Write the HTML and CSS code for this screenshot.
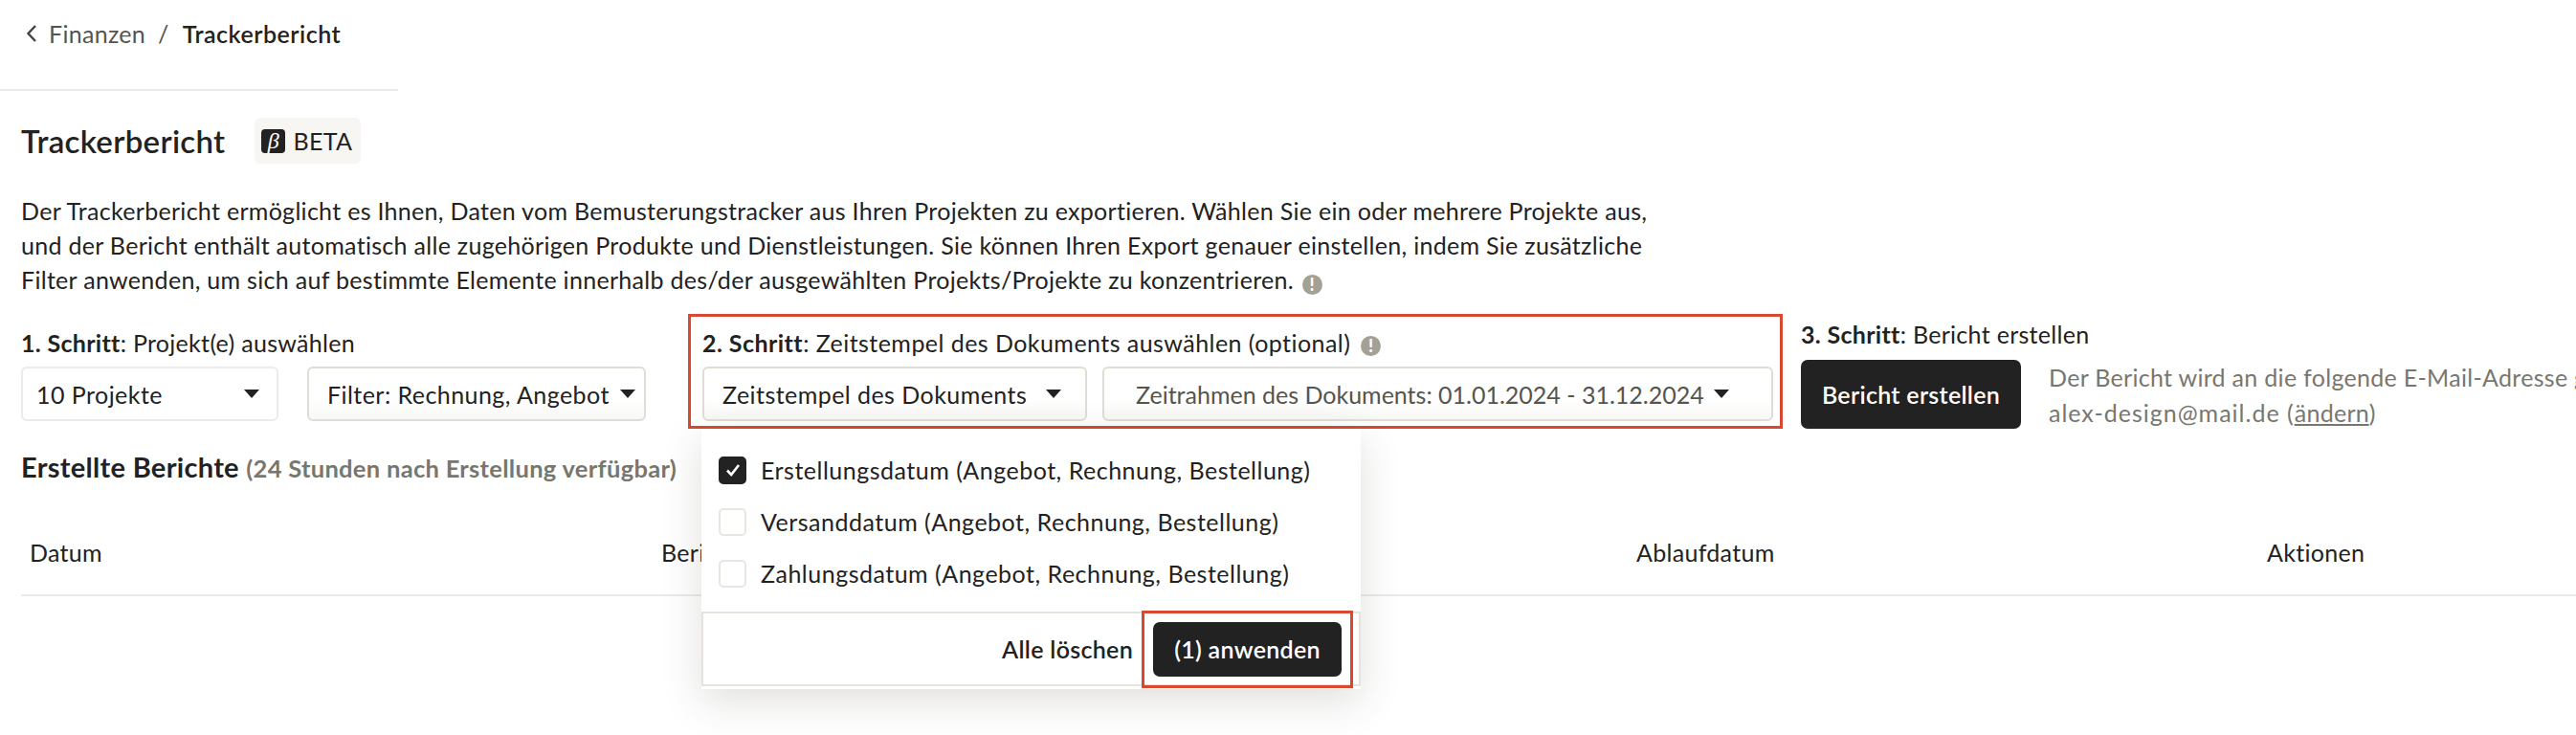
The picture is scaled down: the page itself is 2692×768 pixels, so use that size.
FILE: index.html
```html
<!DOCTYPE html>
<html lang="de">
<head>
    <meta charset="UTF-8">
    <title>Trackerbericht</title>
    <link rel="stylesheet" href="styles.css">
</head>
<body>
    <header class="topbar">
        <nav class="breadcrumb">
            <svg class="back-icon" width="12" height="20" viewBox="0 0 12 20"><path d="M10 2 L2.5 10 L10 18" fill="none" stroke="#44443f" stroke-width="2.4"/></svg>
            <span class="crumb-parent">Finanzen</span>
            <span class="crumb-sep">/</span>
            <span class="crumb-current">Trackerbericht</span>
        </nav>
    </header>

    <main class="content">
        <div class="title-row">
            <h1>Trackerbericht</h1>
            <div class="beta-badge">
                <span class="beta-icon">β</span>
                <span>BETA</span>
            </div>
        </div>

        <p class="intro">Der Trackerbericht ermöglicht es Ihnen, Daten vom Bemusterungstracker aus Ihren Projekten zu exportieren. Wählen Sie ein oder mehrere Projekte aus,<br>und der Bericht enthält automatisch alle zugehörigen Produkte und Dienstleistungen. Sie können Ihren Export genauer einstellen, indem Sie zusätzliche<br>Filter anwenden, um sich auf bestimmte Elemente innerhalb des/der ausgewählten Projekts/Projekte zu konzentrieren. <span class="info-icon">!</span></p>

        <div class="steps">
            <section class="step step-one">
                <div class="step-label"><b>1. Schritt</b>: Projekt(e) auswählen</div>
                <div class="select-row">
                    <div class="select select-projects"><span>10 Projekte</span><i class="caret"></i></div>
                    <div class="select select-filter select-strong"><span>Filter: Rechnung, Angebot</span><i class="caret"></i></div>
                </div>
            </section>

            <section class="step step-two">
                <div class="step-label"><b>2. Schritt</b>: Zeitstempel des Dokuments auswählen (optional) <span class="info-icon">!</span></div>
                <div class="select-row">
                    <div class="select select-stamp select-strong"><span>Zeitstempel des Dokuments</span><i class="caret"></i></div>
                    <div class="select select-range select-strong"><span>Zeitrahmen des Dokuments: 01.01.2024 - 31.12.2024</span><i class="caret"></i></div>
                </div>

                <!-- offenes Dropdown -->
                <div class="dropdown">
                    <div class="option-list">
                        <label class="option"><i class="checkbox checked"><svg width="20" height="20" viewBox="0 0 20 20"><path d="M4 10.5 L8.2 15 L16 5" fill="none" stroke="#fff" stroke-width="2.6"/></svg></i>Erstellungsdatum (Angebot, Rechnung, Bestellung)</label>
                        <label class="option"><i class="checkbox"></i>Versanddatum (Angebot, Rechnung, Bestellung)</label>
                        <label class="option"><i class="checkbox"></i>Zahlungsdatum (Angebot, Rechnung, Bestellung)</label>
                    </div>
                    <div class="dropdown-footer">
                        <span class="clear-all">Alle löschen</span>
                        <div class="apply-frame"><button class="btn btn-apply">(1) anwenden</button></div>
                    </div>
                </div>
            </section>

            <section class="step step-three">
                <div class="step-label"><b>3. Schritt</b>: Bericht erstellen</div>
                <div class="create-row">
                    <button class="btn btn-create">Bericht erstellen</button>
                    <p class="mail-note">Der Bericht wird an die folgende E-Mail-Adresse gesendet:<br><span class="mail-address">alex-design@mail.de (</span><u>ändern</u>)</p>
                </div>
            </section>
        </div>

        <h2 class="reports-title">Erstellte Berichte <span>(24 Stunden nach Erstellung verfügbar)</span></h2>

        <div class="table-head">
            <div>Datum</div>
            <div>Bericht</div>
            <div>Ablaufdatum</div>
            <div>Aktionen</div>
        </div>
    </main>
</body>
</html>
```

FILE: styles.css
```css
* {
    box-sizing: border-box;
}
html, body {
    height: 768px;
    overflow: hidden;
}
body {
    margin: 0;
    width: 2692px;
    background: #fff;
    color: #222;
    font-family: Lato, "Open Sans", sans-serif;
    font-size: 25px;
    letter-spacing: 0.3px;
}
.topbar {
    width: 416px;
    height: 95px;
    border-bottom: 2px solid #ebebe9;
    padding: 22px 0 0 27px;
}
.breadcrumb {
    display: flex;
    align-items: center;
    height: 26px;
}
.back-icon {
    margin-right: 12px;
}
.crumb-parent {
    color: #55554f;
}
.crumb-sep {
    margin: 0 14px 0 13px;
    color: #55554f;
}
.crumb-current {
    font-weight: 600;
    letter-spacing: 0.5px;
}
.content {
    padding: 28px 0 0 22px;
}
.title-row {
    display: flex;
    align-items: center;
    gap: 31px;
    height: 48px;
}
h1 {
    margin: 0;
    font-size: 33px;
    font-weight: 600;
}
.beta-badge {
    display: flex;
    align-items: center;
    gap: 8px;
    height: 48px;
    padding: 0 9px 0 7px;
    background: #f7f6f2;
    border-radius: 6px;
}
.beta-icon {
    width: 25px;
    height: 25px;
    background: #222;
    color: #fff;
    border-radius: 4px;
    text-align: center;
    line-height: 25px;
    font-family: "Liberation Serif", serif;
    font-style: italic;
    font-size: 24px;
}
.intro {
    margin: 31px 0 0;
    line-height: 36px;
}
.info-icon {
    display: inline-block;
    width: 21px;
    height: 21px;
    margin-left: 2px;
    background: #a3a196;
    border-radius: 50%;
    color: #fff;
    font-size: 18px;
    font-weight: 900;
    line-height: 21px;
    text-align: center;
    vertical-align: -2px;
}
.steps {
    display: flex;
    height: 120px;
    margin-top: 18px;
}
.step {
    flex: none;
}
.step-label b {
    font-weight: 700;
}
.step-one {
    width: 697px;
    padding-top: 15px;
}
.step-one .step-label {
    height: 40px;
}
.select-row {
    display: flex;
}
.step-one .select-row {
    gap: 30px;
}
.select {
    display: flex;
    align-items: center;
    justify-content: space-between;
    height: 57px;
    background: #fff;
    border: 2px solid #ecebe7;
    border-radius: 6px;
    white-space: nowrap;
    letter-spacing: 0.45px;
}
.select-strong {
    border-color: #dfddd6;
    background: linear-gradient(#fff 60%, #f8f8f6);
}
.select-projects {
    width: 269px;
    padding: 0 18px 0 14px;
}
.select-filter {
    width: 354px;
    padding: 0 9px 0 19px;
}
.caret {
    flex: none;
    width: 0;
    height: 0;
    border-left: 8px solid transparent;
    border-right: 8px solid transparent;
    border-top: 9px solid #222;
}
.step-two {
    position: relative;
    width: 1144px;
    height: 120px;
    border: 3px solid #d9492f;
    padding: 12px 0 0 12px;
}
.step-two .step-label {
    height: 40px;
    letter-spacing: 0.45px;
}
.step-two .step-label .info-icon {
    margin-left: 4px;
    vertical-align: 0;
}
.step-two .select-row {
    gap: 16px;
}
.select-stamp {
    width: 402px;
    padding: 0 25px 0 19px;
}
.select-range {
    width: 701px;
    padding: 0 44px 0 33px;
    color: #55554f;
    letter-spacing: 0;
}
.dropdown {
    position: absolute;
    left: 11px;
    top: 117px;
    width: 689px;
    height: 272px;
    background: #fff;
    box-shadow: 0 12px 40px rgba(60, 55, 45, 0.16);
}
.option-list {
    height: 191px;
    padding-top: 16px;
}
.option {
    display: flex;
    align-items: center;
    gap: 15px;
    height: 54px;
    padding-left: 18px;
    letter-spacing: 0.5px;
}
.checkbox {
    display: flex;
    align-items: center;
    justify-content: center;
    width: 29px;
    height: 29px;
    border: 2px solid #e8e6e1;
    border-radius: 5px;
}
.checkbox.checked {
    background: #222;
    border-color: #222;
}
.dropdown-footer {
    display: flex;
    align-items: center;
    justify-content: flex-end;
    height: 78px;
    border: 2px solid #e5e3dc;
    padding-right: 6px;
}
.clear-all {
    margin-right: 9px;
    font-weight: 600;
}
.apply-frame {
    border: 3px solid #d9492f;
    padding: 9px;
}
.btn {
    border: none;
    border-radius: 7px;
    background: #222;
    color: #fff;
    font-family: inherit;
    font-size: 25px;
    font-weight: 600;
    letter-spacing: 0.3px;
}
.btn-apply {
    display: block;
    width: 197px;
    height: 57px;
}
.step-three {
    padding: 6px 0 0 19px;
}
.step-three .step-label {
    height: 42px;
}
.create-row {
    display: flex;
    gap: 29px;
    white-space: nowrap;
}
.btn-create {
    width: 230px;
    height: 72px;
}
.mail-note {
    margin: 0;
    color: #77776f;
    line-height: 37px;
}
.mail-address {
    letter-spacing: 1px;
}
.reports-title {
    margin: 22px 0 0;
    font-size: 29px;
    font-weight: 700;
    line-height: 36px;
}
.reports-title span {
    color: #77776f;
    font-size: 25.5px;
}
.table-head {
    display: grid;
    grid-template-columns: 660px 1019px 659px 1fr;
    height: 116px;
    padding: 55px 0 0 9px;
    border-bottom: 2px solid #ebebe9;
}
```
